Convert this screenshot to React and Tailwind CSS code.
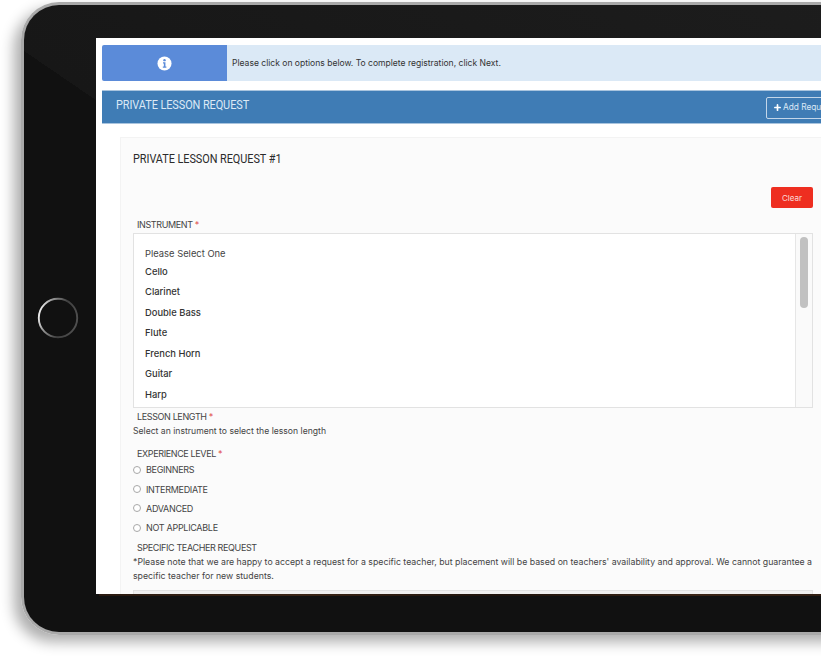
import React from "react";
import { Plus } from "lucide-react";

const body = { fontFamily: "Inter, 'Open Sans', sans-serif" };
const instruments = ["Cello", "Clarinet", "Double Bass", "Flute", "French Horn", "Guitar", "Harp"];
const levels = ["BEGINNERS", "INTERMEDIATE", "ADVANCED", "NOT APPLICABLE"];

function HomeButton() {
  return (
    <svg width="44" height="44" viewBox="0 0 44 44" className="absolute left-[12px] top-[291px]">
      <defs>
        <linearGradient id="hb" x1="0" y1="0.35" x2="1" y2="0.65">
          <stop offset="0" stopColor="#f2f2f2" />
          <stop offset="0.22" stopColor="#9a9a9a" />
          <stop offset="0.6" stopColor="#404040" />
          <stop offset="1" stopColor="#505050" />
        </linearGradient>
      </defs>
      <circle cx="22" cy="22" r="19.2" fill="#111" stroke="url(#hb)" strokeWidth="1.9" />
    </svg>
  );
}

function Label({ children, required }) {
  return (
    <div className="pl-1 text-[9px] leading-[12px] tracking-[-0.37px] text-[#444]">
      {children}
      {required && <span className="text-[#e04a4a]"> *</span>}
    </div>
  );
}

export default function App() {
  return (
    <div className="relative h-[660px] w-[821px] overflow-hidden bg-white" style={body}>
      <div className="relative ml-[21px] mt-[2px] h-[633px] w-[900px] rounded-l-[38px] border-[3px] border-r-0 border-[#a9a9a9] bg-[linear-gradient(214.3deg,#1d1d1d_0%,#171717_53.1%,#111111_53.1%)] pl-[72px] pt-[33px] shadow-[-7px_7px_14px_rgba(0,0,0,0.32)]">
        <HomeButton />
        <div className="flex h-[556px] w-[800px] flex-col overflow-hidden bg-white px-[6px] pt-[7px]">
          <div className="flex h-[36px] shrink-0 overflow-hidden rounded-l-[2px]">
            <div className="flex w-[125px] items-center justify-center bg-[#5b8bd9]">
              <svg width="15" height="15" viewBox="0 0 16 16">
                <circle cx="8" cy="8" r="7.5" fill="#fff" />
                <circle cx="8" cy="4.4" r="1.3" fill="#5b8bd9" />
                <path d="M6.4 6.7h2.6v4.6h1v1.2H6.2v-1.2h1.1V7.9h-.9z" fill="#5b8bd9" />
              </svg>
            </div>
            <div className="flex flex-1 items-center bg-[#dbe9f6] pl-[5px] text-[8.55px] text-[#333]">
              Please click on options below. To complete registration, click Next.
            </div>
          </div>

          <div className="mt-[9px] flex h-[34px] shrink-0 items-center justify-between border-y border-[#a9c4de] bg-[#3f7cb5] pl-[14px] pr-[24px]">
            <span className="origin-left scale-x-[0.875] pb-[4px] text-[12.5px] tracking-[-0.1px] text-[#dce9f5]" style={{ fontFamily: "Roboto, sans-serif" }}>PRIVATE LESSON REQUEST</span>
            <button className="mt-[1px] flex h-[22px] w-[100px] items-center gap-[1px] rounded-[2px] border border-[#c3d6e9] pl-[6px] text-[8.3px] text-[#dce9f5]">
              <Plus size={9} strokeWidth={4.5} className="text-white" /> Add Request
            </button>
          </div>

          <div className="ml-[18px] mt-[13px] flex-1 border border-[#f3f3f3] bg-[#fbfbfb] pl-[12px] pt-[13px]">
            <h2 className="origin-left scale-x-[0.87] text-[12.5px] leading-[15px] tracking-[-0.05px] text-[#2b2b2b]" style={{ fontFamily: "Roboto, sans-serif" }}>PRIVATE LESSON REQUEST #1</h2>
            <div className="w-[680px]">
              <div className="mt-[21px] flex justify-end">
                <button className="h-[21px] w-[42px] rounded-[2px] bg-[#ee2e20] text-[8px] text-[#fbdcd9]">Clear</button>
              </div>
              <div className="mt-[11px]"><Label required>INSTRUMENT</Label></div>
              <div className="mt-[2px] flex h-[175px] border border-[#e2e2e2] bg-white">
                <div className="flex-1 pl-[11px] pt-[13.5px]">
                  <div className="text-[9.4px] leading-[12px] text-[#444]">Please Select One</div>
                  <div className="mt-[2px] flex flex-col">
                    {instruments.map((n) => (
                      <div key={n} className="h-[20.5px] text-[9.4px] font-medium leading-[20.5px] text-[#333]">{n}</div>
                    ))}
                  </div>
                </div>
                <div className="w-[17px] border-l border-[#e6e6e6] bg-[#fafafa] px-[4px] pt-[3px]">
                  <div className="h-[71px] rounded-[5px] bg-[#c1c1c1]" />
                </div>
              </div>
              <div className="mt-[3px]"><Label required>LESSON LENGTH</Label></div>
              <div className="mt-[2px] text-[8.65px] leading-[12px] text-[#444]">Select an instrument to select the lesson length</div>
              <div className="mt-[11px]"><Label required>EXPERIENCE LEVEL</Label></div>
              <div className="mt-[0.5px] flex flex-col">
                {levels.map((l) => (
                  <div key={l} className="flex h-[19.3px] items-center gap-[5px] text-[9px] tracking-[-0.3px] text-[#444]">
                    <span className="-mt-[1px] h-[8px] w-[8px] rounded-full border border-[#a8a8a8] bg-white" />
                    {l}
                  </div>
                ))}
              </div>
              <div className="mt-[4px]"><Label>SPECIFIC TEACHER REQUEST</Label></div>
              <p className="mt-[1px] text-[8.75px] leading-[14px] text-[#444]">
                *Please note that we are happy to accept a request for a specific teacher, but placement will be based on teachers' availability and approval. We cannot guarantee a specific teacher for new students.
              </p>
              <div className="mt-[7.5px] h-[20px] border border-[#e2e2e2] bg-[#efefef]" />
            </div>
          </div>
        </div>
        <div className="ml-[3px] h-[2px] w-[797px] bg-[linear-gradient(90deg,#2a1a10,#3a2415,#1e130c,#3a2415,#2a1a10)]" />
      </div>
    </div>
  );
}
